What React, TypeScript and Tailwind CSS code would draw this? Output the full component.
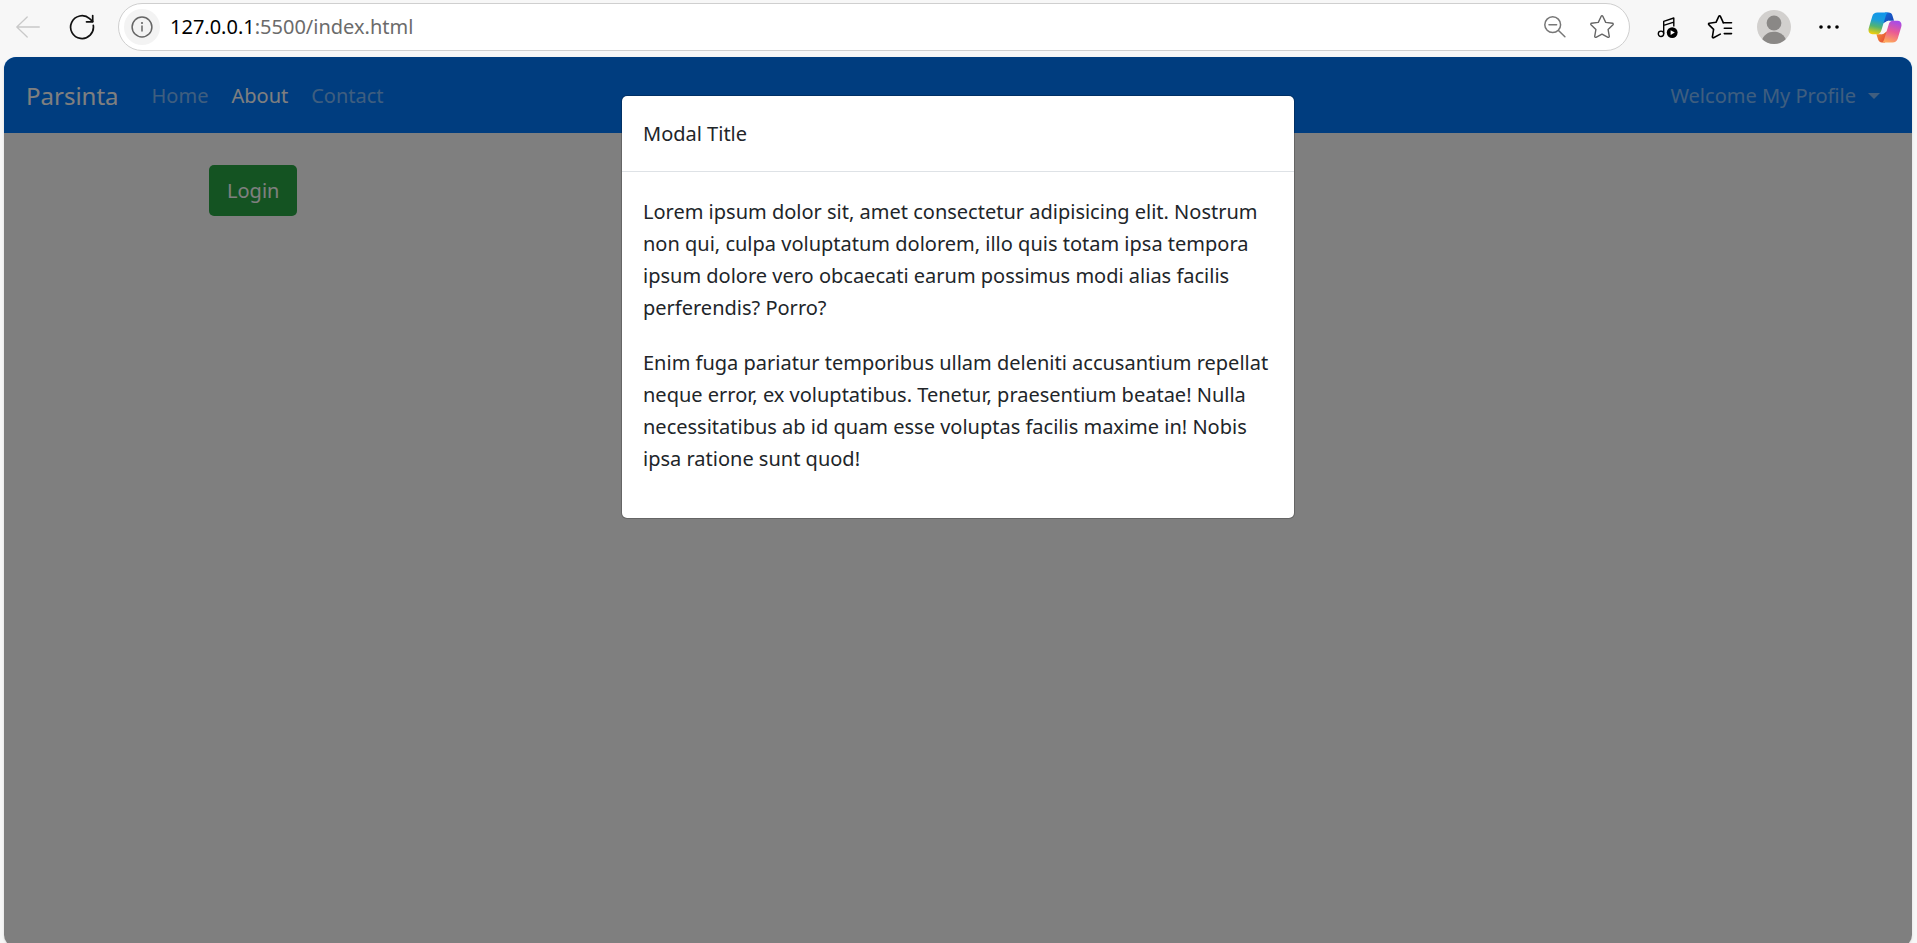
import React from "react";

const paragraphs = [
  "Lorem ipsum dolor sit, amet consectetur adipisicing elit. Nostrum non qui, culpa voluptatum dolorem, illo quis totam ipsa tempora ipsum dolore vero obcaecati earum possimus modi alias facilis perferendis? Porro?",
  "Enim fuga pariatur temporibus ullam deleniti accusantium repellat neque error, ex voluptatibus. Tenetur, praesentium beatae! Nulla necessitatibus ab id quam esse voluptas facilis maxime in! Nobis ipsa ratione sunt quod!",
];

const navLinks = [
  { label: "Home", active: false },
  { label: "About", active: true },
  { label: "Contact", active: false },
];

function BackIcon() {
  return (
    <svg width="24" height="22" viewBox="0 0 24 22" fill="none" stroke="#c9c9c9" strokeWidth="1.3" strokeLinecap="round" strokeLinejoin="round">
      <path d="M23.3 11H.8M11.2 1 .8 11l10.4 10" />
    </svg>
  );
}

function ReloadIcon() {
  return (
    <svg width="26" height="26" viewBox="0 0 26 26" fill="none" stroke="#111" strokeWidth="1.7" strokeLinecap="round" strokeLinejoin="round">
      <path d="M24.3 11.4A11.400 11.400 0 1 1 20.600 4.600L23.600 7.400" />
      <path d="M23.700 1.600v6.200h-6.200" />
    </svg>
  );
}

function InfoIcon() {
  return (
    <svg width="22" height="22" viewBox="0 0 22 22" fill="none" stroke="#666" strokeWidth="1.5" strokeLinecap="round">
      <circle cx="11" cy="11" r="9.9" />
      <path d="M11 10v5" />
      <circle cx="11" cy="7" r="1.1" fill="#666" stroke="none" />
    </svg>
  );
}

function ZoomOutIcon() {
  return (
    <svg width="24" height="24" viewBox="0 0 24 24" fill="none" stroke="#777" strokeWidth="1.5" strokeLinecap="round">
      <circle cx="9.7" cy="9.7" r="7.9" />
      <path d="M6 9.7h7.6M15.5 15.5l6.4 6.2" />
    </svg>
  );
}

function StarIcon() {
  return (
    <svg width="26" height="26" viewBox="0 0 26 26" fill="none" stroke="#666" strokeWidth="1.4" strokeLinejoin="round">
      <path d="M12.200 2.200a.9.9 0 0 1 1.600 0l2.900 6.200 6.800.9a.9.9 0 0 1 .5 1.500l-4.900 4.700 1.200 6.900a.9.9 0 0 1-1.300.9L13 20.100l-6 3.200a.9.9 0 0 1-1.300-.9l1.200-6.900L2 10.800a.9.9 0 0 1 .5-1.500l6.800-.9z" />
    </svg>
  );
}

function MediaIcon() {
  return (
    <svg width="22" height="24" viewBox="0 0 22 24" fill="none" stroke="#000" strokeWidth="1.4" strokeLinejoin="round">
      <circle cx="4" cy="18.8" r="2.7" />
      <path d="M6.7 18.8V6.4L16.8 3v8.5M6.7 10.3l10.100-3.200" />
      <circle cx="15.2" cy="17.6" r="5.4" fill="#000" stroke="none" />
      <path d="m13.600 15.200 4.200 2.400-4.200 2.400z" fill="#fff" stroke="none" />
    </svg>
  );
}

function FavoritesIcon() {
  return (
    <svg width="26" height="26" viewBox="0 0 26 26" fill="none" stroke="#000" strokeWidth="1.6" strokeLinecap="round" strokeLinejoin="round">
      <path d="M16.300 8.700h8.200M17.300 14.200h7.200M17.300 19.600h7.200" />
      <path d="M16.300 8.700 13.400 2.300a.9.9 0 0 0-1.600 0L9 8.300l-6.800.9a.8.8 0 0 0-.4 1.400l4.800 4.800-1.200 7.400a.8.8 0 0 0 1.200.9l6.700-3.600" />
    </svg>
  );
}

function AvatarIcon() {
  return (
    <svg width="34" height="34" viewBox="0 0 34 34">
      <clipPath id="avatar-clip">
        <circle cx="17" cy="17" r="17" />
      </clipPath>
      <g clipPath="url(#avatar-clip)">
        <rect width="34" height="34" fill="#d2d0ce" />
        <circle cx="17" cy="13" r="7.4" fill="#8a8886" />
        <path d="M4.500 31c2-6 6.500-9.300 12.500-9.300s10.500 3.300 12.500 9.300L17 40z" fill="#8a8886" />
      </g>
    </svg>
  );
}

function MoreIcon() {
  return (
    <svg width="20" height="6" viewBox="0 0 20 6" fill="#000">
      <circle cx="2" cy="3" r="1.8" />
      <circle cx="10" cy="3" r="1.8" />
      <circle cx="18" cy="3" r="1.8" />
    </svg>
  );
}

function CopilotIcon() {
  return (
    <svg width="34" height="31" viewBox="0 0 34 31">
      <defs>
        <linearGradient id="cp-left" x1="0.5" y1="0" x2="0.3" y2="1">
          <stop offset="0" stopColor="#1296ea" />
          <stop offset="0.35" stopColor="#1b9edb" />
          <stop offset="0.65" stopColor="#52b471" />
          <stop offset="1" stopColor="#f2cf0a" />
        </linearGradient>
        <linearGradient id="cp-top" x1="0" y1="0" x2="1" y2="1">
          <stop offset="0" stopColor="#1470dd" />
          <stop offset="1" stopColor="#1b3fae" />
        </linearGradient>
        <linearGradient id="cp-right" x1="0.7" y1="0" x2="0.4" y2="1">
          <stop offset="0" stopColor="#a54bea" />
          <stop offset="0.5" stopColor="#ea5a94" />
          <stop offset="1" stopColor="#ffa85b" />
        </linearGradient>
        <linearGradient id="cp-bottom" x1="0" y1="0" x2="1" y2="0.6">
          <stop offset="0" stopColor="#f79a31" />
          <stop offset="1" stopColor="#e0443b" />
        </linearGradient>
      </defs>
      <path d="M17 .5h3.500c2.200 0 3.400 1.200 4 3.200l1.500 5.100h-5.500l-6.500 3z" fill="url(#cp-top)" />
      <path d="M17 30.500h-3c-2.200 0-3.400-1.200-4-3.200l-1.600-5.100H14l7-4z" fill="url(#cp-bottom)" />
      <path d="M9.500.5H21c-1.800 0-2.600 1.300-3.200 3.300L13.300 18.500c-.7 2.400-2 3.700-4.300 3.700H4.500C1.200 22.200-.2 19.500.8 16L4.300 4.200C5 1.800 6.800.5 9.500.5z" fill="url(#cp-left)" />
      <path d="M24.500 30.500H13c1.800 0 2.600-1.300 3.200-3.300L20.700 12.500c.7-2.400 2-3.700 4.300-3.700h4.500c3.300 0 4.700 2.700 3.700 6.200L29.700 26.800c-.7 2.400-2.500 3.700-5.200 3.700z" fill="url(#cp-right)" />
      <path d="M21 8.800c-2.300 0-3.900 1.300-4.600 3.700l-3 9.700c2.300 0 3.900-1.300 4.600-3.700z" fill="#f7f7f7" />
    </svg>
  );
}

function BrowserBar() {
  return (
    <header className="flex h-[57px] shrink-0 items-center pb-[3px] pr-[15px] pl-4">
      <button type="button" aria-label="Back" disabled>
        <BackIcon />
      </button>
      <button type="button" aria-label="Reload" className="ml-[29px]">
        <ReloadIcon />
      </button>
      <div className="ml-[23px] flex h-12 flex-1 items-center rounded-full border border-[#cfcfcf] bg-white pr-[14px] pl-[5px]">
        <button type="button" aria-label="Site information" className="flex size-9 shrink-0 items-center justify-center rounded-full bg-[#f3f3f3]">
          <InfoIcon />
        </button>
        <a href="#" aria-label="Address" className="ml-[10px] flex-1 text-[20px] leading-7 text-[#6b6b6b]">
          <span className="text-black">127.0.0.1</span>:5500/index.html
        </a>
        <button type="button" aria-label="Zoom out">
          <ZoomOutIcon />
        </button>
        <button type="button" aria-label="Add to favorites" className="ml-[22px]">
          <StarIcon />
        </button>
      </div>
      <button type="button" aria-label="Media" className="ml-[27px]">
        <MediaIcon />
      </button>
      <button type="button" aria-label="Favorites" className="ml-7">
        <FavoritesIcon />
      </button>
      <button type="button" aria-label="Account" className="ml-6">
        <AvatarIcon />
      </button>
      <button type="button" aria-label="More" className="ml-7">
        <MoreIcon />
      </button>
      <button type="button" aria-label="Copilot" className="ml-[29px]">
        <CopilotIcon />
      </button>
    </header>
  );
}

function Navbar() {
  return (
    <nav className="flex h-[76px] items-center bg-[#007bff] px-[22px] pt-[2px]">
      <a href="#" className="text-[24px] text-white">
        Parsinta
      </a>
      <ul className="ml-[33px] flex gap-[23px] text-[20px]">
        {navLinks.map((link) => (
          <li key={link.label}>
            <a href="#" className={link.active ? "text-white" : "text-white/50"}>
              {link.label}
            </a>
          </li>
        ))}
      </ul>
      <button type="button" className="mr-[10px] ml-auto flex items-center gap-3 text-[20px] text-white/50">
        Welcome My Profile
        <span className="border-x-6 border-t-6 border-x-transparent border-t-current" />
      </button>
    </nav>
  );
}

function Modal() {
  return (
    <section
      role="dialog"
      aria-labelledby="modal-title"
      className="w-full max-w-[674px] rounded-md border border-black/20 bg-white bg-clip-padding text-[20px] leading-8 text-[#212529]"
    >
      <h2 id="modal-title" className="border-b border-[#dee2e6] px-[21px] pt-[22px] pb-[21px]">
        Modal Title
      </h2>
      <div className="flex flex-col gap-[23px] px-[21px] pt-6 pb-[43px]">
        {paragraphs.map((text) => (
          <p key={text}>{text}</p>
        ))}
      </div>
    </section>
  );
}

export default function App() {
  return (
    <div className="flex h-screen flex-col overflow-hidden bg-[#f7f7f7] font-['Noto_Sans','Open_Sans',sans-serif]">
      <BrowserBar />
      <div className="relative mr-[5px] -mb-1 ml-1 flex-1 overflow-hidden rounded-xl bg-white shadow-sm">
        <Navbar />
        <main className="mx-auto max-w-[1498px] pt-8">
          <button type="button" className="rounded-[5px] bg-[#28a745] px-[18px] py-[10px] text-[20px] leading-[31px] text-white">
            Login
          </button>
        </main>
        <div className="absolute inset-0 flex items-start justify-center bg-black/50 pt-[38px]">
          <Modal />
        </div>
      </div>
    </div>
  );
}
